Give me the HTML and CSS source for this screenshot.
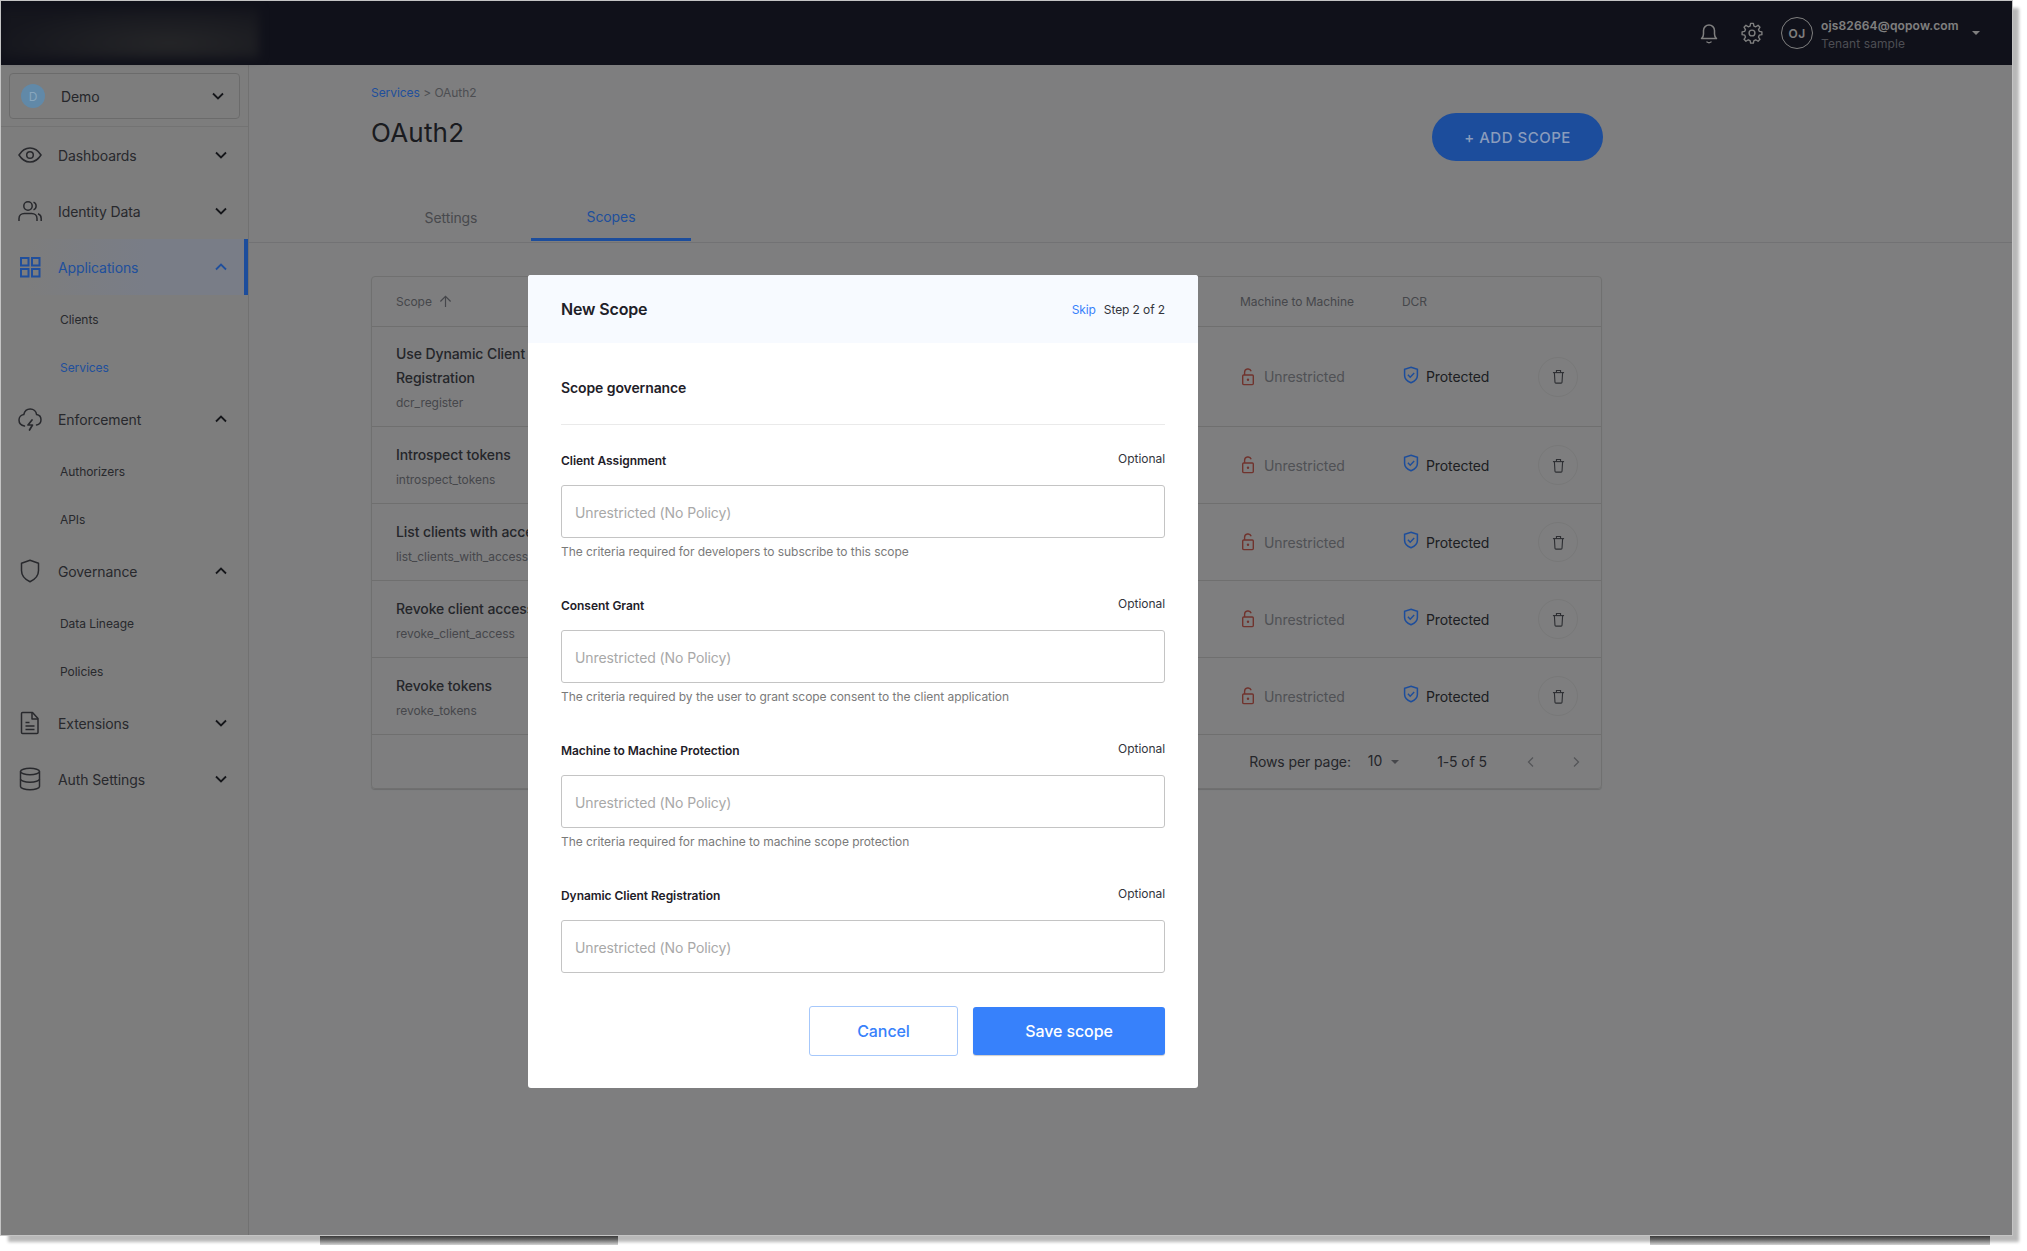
FILE: index.html
```html
<!DOCTYPE html>
<html lang="en">
<head>
  <meta charset="UTF-8">
  <meta name="viewport" content="width=device-width, initial-scale=1.0">
  <title>OAuth2 - New Scope</title>
  <link rel="stylesheet" href="styles.css">
</head>
<body>
  <svg class="sprite" xmlns="http://www.w3.org/2000/svg">
    <symbol id="i-down" viewBox="0 0 16 16"><path d="M3 5.5l5 5 5-5" fill="none" stroke="currentColor" stroke-width="1.8"/></symbol>
    <symbol id="i-up" viewBox="0 0 16 16"><path d="M3 10.5l5-5 5 5" fill="none" stroke="currentColor" stroke-width="1.8"/></symbol>
    <symbol id="i-lock" viewBox="0 0 14 18"><g fill="none" stroke="currentColor" stroke-width="1.4"><rect x="1.7" y="7" width="10.6" height="9.6" rx="1"/><path d="M3.6 7V4.4a3.4 3.4 0 0 1 6.6-1.2"/></g><circle cx="7" cy="11.8" r="1.2" fill="currentColor"/></symbol>
    <symbol id="i-shield" viewBox="0 0 16 18"><path d="M8 1.2l6.4 2.2v6c0 3.4-3 5.9-6.4 7.4-3.4-1.5-6.4-4-6.4-7.4v-6z" fill="none" stroke="currentColor" stroke-width="1.5"/><path d="M4.9 8.8l2.3 2.4 4-4.2" fill="none" stroke="currentColor" stroke-width="1.4"/></symbol>
    <symbol id="i-trash" viewBox="0 0 14 16"><g fill="none" stroke="currentColor" stroke-width="1.2"><path d="M2.6 4.2l.6 10a1 1 0 0 0 1 .9h5.600a1 1 0 0 0 1-.9l.6-10"/><path d="M1 3.800h12"/><path d="M4.800 3.600V1.600h4.400v2"/></g></symbol>
  </svg>

  <div class="frame">
    <header class="topbar">
      <div class="logo-blur"></div>
      <div class="top-actions">
        <svg class="top-icon" viewBox="0 0 24 24" fill="none" stroke="currentColor" stroke-width="1.5"><path d="M4.500 17.500c1.300-1 2-2.400 2-4.500V9.500a5.500 5.500 0 0 1 11 0V13c0 2.100.7 3.500 2 4.500z" stroke-linejoin="round"/><path d="M10 21c1.200.8 2.800.8 4 0" stroke-linecap="round"/></svg>
        <svg class="top-icon gear" viewBox="0 0 24 24" fill="none" stroke="currentColor" stroke-width="1.5" stroke-linejoin="round"><path d="M10.500 1.500h3l.6 2.900 2 .8 2.500-1.600 2.100 2.100-1.600 2.500.8 2 2.900.6v3l-2.900.6-.8 2 1.600 2.500-2.100 2.100-2.500-1.600-2 .8-.6 2.900h-3l-.6-2.900-2-.8-2.500 1.600-2.100-2.100 1.600-2.500-.8-2-2.900-.6v-3l2.900-.6.8-2-1.600-2.500 2.100-2.100 2.500 1.600 2-.8z"/><circle cx="12" cy="12" r="3.200"/></svg>
        <div class="user-circle">OJ</div>
        <div class="user-info">
          <div class="user-email">ojs82664@qopow.com</div>
          <div class="user-tenant">Tenant sample</div>
        </div>
        <span class="caret top-caret"></span>
      </div>
    </header>

    <div class="layout">
      <aside class="sidebar">
        <div class="tenant-wrap">
          <div class="tenant-select">
            <span class="tenant-avatar">D</span>
            <span class="tenant-name">Demo</span>
            <svg class="chev"><use href="#i-down"/></svg>
          </div>
        </div>
        <nav>
          <a class="nav-item">
            <svg class="nav-icon" viewBox="0 0 24 24" fill="none" stroke="currentColor" stroke-width="1.5"><path d="M1 12c3-4.800 6.700-7 11-7s8 2.200 11 7c-3 4.800-6.700 7-11 7s-8-2.200-11-7z"/><circle cx="12" cy="12" r="3.300"/></svg>
            <span class="nav-label">Dashboards</span>
            <svg class="chev"><use href="#i-down"/></svg>
          </a>
          <a class="nav-item">
            <svg class="nav-icon" viewBox="0 0 24 24" fill="none" stroke="currentColor" stroke-width="1.5"><circle cx="10" cy="7" r="4.200"/><path d="M1 22v-2.500c0-3 2.400-5 5.300-5h7.400c2.900 0 5.300 2 5.300 5V22"/><path d="M15.500 3.100a4.200 4.200 0 0 1 0 7.800"/><path d="M20 14.800c1.900.8 3.200 2.500 3.200 4.700V22"/></svg>
            <span class="nav-label">Identity Data</span>
            <svg class="chev"><use href="#i-down"/></svg>
          </a>
          <a class="nav-item active">
            <svg class="nav-icon" viewBox="0 0 24 24" fill="none" stroke="currentColor" stroke-width="2"><rect x="3" y="3" width="7.500" height="7.500"/><rect x="14" y="3" width="7.500" height="7.500"/><rect x="3" y="14" width="7.500" height="7.500"/><rect x="14" y="14" width="7.500" height="7.500"/></svg>
            <span class="nav-label">Applications</span>
            <svg class="chev"><use href="#i-up"/></svg>
          </a>
          <a class="nav-sub">Clients</a>
          <a class="nav-sub current">Services</a>
          <a class="nav-item">
            <svg class="nav-icon" viewBox="0 0 24 24" fill="none" stroke="currentColor" stroke-width="1.5"><path d="M6.500 19C3 18.400 1 16 1 13c0-3 2.200-5.200 4.800-5.500C6.500 4.200 9 2 12.200 2c3.400 0 6 2.400 6.400 5.600 2.600.4 4.400 2.600 4.400 5.200 0 2.600-1.800 4.800-4.500 5.200" stroke-linecap="round"/><path d="M14 13l-4 5h4.500l-3 5" stroke-width="1.700" stroke-linejoin="round" stroke-linecap="round"/></svg>
            <span class="nav-label">Enforcement</span>
            <svg class="chev"><use href="#i-up"/></svg>
          </a>
          <a class="nav-sub">Authorizers</a>
          <a class="nav-sub">APIs</a>
          <a class="nav-item">
            <svg class="nav-icon" viewBox="0 0 24 24" fill="none" stroke="currentColor" stroke-width="1.500"><path d="M12 1.200l8.500 3v7.300c0 5-3.500 8.900-8.500 11.200-5-2.300-8.500-6.200-8.500-11.200V4.200z" stroke-linejoin="round"/></svg>
            <span class="nav-label">Governance</span>
            <svg class="chev"><use href="#i-up"/></svg>
          </a>
          <a class="nav-sub">Data Lineage</a>
          <a class="nav-sub">Policies</a>
          <a class="nav-item">
            <svg class="nav-icon" viewBox="0 0 24 24" fill="none" stroke="currentColor" stroke-width="1.500" stroke-linejoin="round"><path d="M4.500 1.500h10l5.500 6v14a1 1 0 0 1-1 1H4.500a1 1 0 0 1-1-1v-19a1 1 0 0 1 1-1z"/><path d="M14 1.500v6.500h6"/><path d="M7.500 11.500h4M7.500 15h9M7.500 18.500h9"/></svg>
            <span class="nav-label">Extensions</span>
            <svg class="chev"><use href="#i-down"/></svg>
          </a>
          <a class="nav-item">
            <svg class="nav-icon" viewBox="0 0 24 24" fill="none" stroke="currentColor" stroke-width="1.500"><ellipse cx="12" cy="4.500" rx="9.500" ry="3.200"/><path d="M2.500 4.500v15c0 1.800 4.300 3.200 9.500 3.200s9.500-1.400 9.500-3.200v-15"/><path d="M2.500 12c0 1.800 4.300 3.200 9.500 3.200s9.500-1.400 9.500-3.200"/></svg>
            <span class="nav-label">Auth Settings</span>
            <svg class="chev"><use href="#i-down"/></svg>
          </a>
        </nav>
      </aside>

      <main class="main">
        <div class="breadcrumb"><a>Services</a> &gt; OAuth2</div>
        <div class="title-row">
          <h1>OAuth2</h1>
          <button class="add-btn">+ ADD SCOPE</button>
        </div>
        <div class="tabs">
          <div class="tab">Settings</div>
          <div class="tab selected">Scopes</div>
        </div>

        <div class="table-card">
          <div class="row head">
            <div class="cell-scope">Scope <svg class="sort-arrow" viewBox="0 0 14 14" fill="none" stroke="currentColor" stroke-width="1.300"><path d="M7 13V1.500M1.500 7L7 1.500 12.500 7"/></svg></div>
            <div>Machine to Machine</div>
            <div>DCR</div>
            <div></div>
          </div>
          <div class="row first">
            <div class="scope-info"><div class="scope-name">Use Dynamic Client Registration</div><div class="scope-code">dcr_register</div></div>
            <div class="status"><svg class="lock"><use href="#i-lock"/></svg>Unrestricted</div>
            <div class="dcr"><svg class="shield"><use href="#i-shield"/></svg>Protected</div>
            <div class="del"><svg class="trash"><use href="#i-trash"/></svg></div>
          </div>
          <div class="row">
            <div class="scope-info"><div class="scope-name">Introspect tokens</div><div class="scope-code">introspect_tokens</div></div>
            <div class="status"><svg class="lock"><use href="#i-lock"/></svg>Unrestricted</div>
            <div class="dcr"><svg class="shield"><use href="#i-shield"/></svg>Protected</div>
            <div class="del"><svg class="trash"><use href="#i-trash"/></svg></div>
          </div>
          <div class="row">
            <div class="scope-info"><div class="scope-name">List clients with access</div><div class="scope-code">list_clients_with_access</div></div>
            <div class="status"><svg class="lock"><use href="#i-lock"/></svg>Unrestricted</div>
            <div class="dcr"><svg class="shield"><use href="#i-shield"/></svg>Protected</div>
            <div class="del"><svg class="trash"><use href="#i-trash"/></svg></div>
          </div>
          <div class="row">
            <div class="scope-info"><div class="scope-name">Revoke client access</div><div class="scope-code">revoke_client_access</div></div>
            <div class="status"><svg class="lock"><use href="#i-lock"/></svg>Unrestricted</div>
            <div class="dcr"><svg class="shield"><use href="#i-shield"/></svg>Protected</div>
            <div class="del"><svg class="trash"><use href="#i-trash"/></svg></div>
          </div>
          <div class="row">
            <div class="scope-info"><div class="scope-name">Revoke tokens</div><div class="scope-code">revoke_tokens</div></div>
            <div class="status"><svg class="lock"><use href="#i-lock"/></svg>Unrestricted</div>
            <div class="dcr"><svg class="shield"><use href="#i-shield"/></svg>Protected</div>
            <div class="del"><svg class="trash"><use href="#i-trash"/></svg></div>
          </div>
          <div class="table-foot">
            <span class="rows-label">Rows per page:</span>
            <span class="rows-value">10</span>
            <span class="caret rows-caret"></span>
            <span class="page-info">1-5 of 5</span>
            <svg class="page-arrow" viewBox="0 0 12 12" fill="none" stroke="currentColor" stroke-width="1.300"><path d="M8 1.500L3.500 6 8 10.500"/></svg>
            <svg class="page-arrow" viewBox="0 0 12 12" fill="none" stroke="currentColor" stroke-width="1.300"><path d="M4 1.500L8.500 6 4 10.500"/></svg>
          </div>
        </div>
      </main>
    </div>

    <div class="backdrop">
      <div class="modal">
        <div class="modal-head">
          <h2>New Scope</h2>
          <div class="modal-step"><a>Skip</a><span>Step 2 of 2</span></div>
        </div>
        <div class="modal-body">
          <h3>Scope governance</h3>
          <div class="field">
            <div class="field-top"><label>Client Assignment</label><span>Optional</span></div>
            <input type="text" placeholder="Unrestricted (No Policy)">
            <p>The criteria required for developers to subscribe to this scope</p>
          </div>
          <div class="field">
            <div class="field-top"><label>Consent Grant</label><span>Optional</span></div>
            <input type="text" placeholder="Unrestricted (No Policy)">
            <p>The criteria required by the user to grant scope consent to the client application</p>
          </div>
          <div class="field">
            <div class="field-top"><label>Machine to Machine Protection</label><span>Optional</span></div>
            <input type="text" placeholder="Unrestricted (No Policy)">
            <p>The criteria required for machine to machine scope protection</p>
          </div>
          <div class="field field-last">
            <div class="field-top"><label>Dynamic Client Registration</label><span>Optional</span></div>
            <input type="text" placeholder="Unrestricted (No Policy)">
          </div>
          <div class="modal-actions">
            <button class="btn-cancel">Cancel</button>
            <button class="btn-save">Save scope</button>
          </div>
        </div>
      </div>
    </div>
  </div>
  <div class="shadow-patch left"></div>
  <div class="shadow-patch right"></div>
</body>
</html>
```

FILE: styles.css
```css
* {
  box-sizing: border-box;
}
html, body {
  margin: 0;
  height: 100%;
  background: #fff;
  overflow: hidden;
}
body {
  font-family: Inter, "Noto Sans", sans-serif;
  font-size: 14px;
  letter-spacing: -0.1px;
  color: #3a3c44;
  position: relative;
}
.sprite {
  display: none;
}
.frame {
  position: relative;
  width: 2013px;
  height: 1236px;
  border: 1px solid #c4c4c4;
  background: #fcfdff;
  box-shadow: 7px 7px 3px -1px rgba(0, 0, 0, 0.28);
  display: flex;
  flex-direction: column;
  overflow: hidden;
}
.shadow-patch {
  position: absolute;
  top: 1236px;
  height: 9px;
  background: linear-gradient(#3a3a3a, #666 40%, #d4d4d4);
}
.shadow-patch.left {
  left: 320px;
  width: 298px;
}
.shadow-patch.right {
  left: 1650px;
  width: 340px;
}

/* these stay more saturated than a plain black scrim allows, so they sit over it */
.tenant-avatar,
.add-btn,
.nav-item.active,
.nav-sub.current,
.breadcrumb a,
.tab.selected,
.shield {
  position: relative;
  z-index: 2;
}

/* top bar */
.topbar {
  height: 64px;
  flex-shrink: 0;
  background: #202234;
  display: flex;
  align-items: center;
  justify-content: space-between;
}
.logo-blur {
  width: 258px;
  height: 50px;
  background: radial-gradient(ellipse at 65% 70%, #4a4b50, #2a2c3a 75%);
  filter: blur(5px);
}
.top-actions {
  display: flex;
  align-items: center;
  color: #fff;
  padding-right: 32px;
}
.top-icon {
  width: 24px;
  height: 24px;
  margin-right: 20px;
}
.top-icon.gear {
  width: 22px;
  height: 22px;
  margin-right: 18px;
}
.user-circle {
  width: 32px;
  height: 32px;
  border: 1.5px solid #fff;
  border-radius: 50%;
  font-size: 12px;
  font-weight: 600;
  letter-spacing: 0.3px;
  display: flex;
  align-items: center;
  justify-content: center;
  margin-right: 8px;
}
.user-info {
  width: 141px;
  margin-right: 10px;
  padding-top: 4px;
}
.user-email {
  font-size: 12px;
  line-height: 18px;
  font-weight: 600;
  letter-spacing: 0.15px;
}
.user-tenant {
  font-size: 12px;
  line-height: 18px;
  letter-spacing: 0.1px;
  color: #9a9ca6;
}
.caret {
  width: 0;
  height: 0;
  border-left: 4px solid transparent;
  border-right: 4px solid transparent;
  border-top: 4px solid #fff;
}

/* sidebar */
.layout {
  flex: 1;
  display: flex;
  min-height: 0;
}
.sidebar {
  width: 248px;
  flex-shrink: 0;
  background: #fbfbfb;
  border-right: 1px solid #e2e2e2;
}
.tenant-wrap {
  padding: 8px 8px 7px 8px;
  border-bottom: 1px solid #e6e6e6;
  height: 62px;
}
.tenant-select {
  height: 46px;
  border: 1px solid #d6d6d6;
  border-radius: 4px;
  display: flex;
  align-items: center;
  padding: 0 13px 0 11px;
}
.tenant-avatar {
  width: 24px;
  height: 24px;
  border-radius: 50%;
  background: #6189a8;
  color: #88a6bd;
  font-size: 12px;
  display: flex;
  align-items: center;
  justify-content: center;
  margin-right: 16px;
}
.tenant-name {
  flex: 1;
  color: #4a4c54;
}
.chev {
  width: 16px;
  height: 16px;
  color: #2a2c34;
}
.nav-item {
  height: 56px;
  display: flex;
  align-items: center;
  padding: 0 19px 0 17px;
  color: #50525a;
}
.nav-icon {
  width: 24px;
  height: 24px;
  margin-right: 16px;
}
.nav-label {
  flex: 1;
}
.nav-item.active {
  color: #204f9c;
  background: linear-gradient(90deg, #7d7d7d 10%, #797d87 60%);
  border-right: 4px solid #1c4d9c;
  padding-right: 15px;
}
.nav-item.active .chev {
  color: #204f9c;
}
.nav-sub {
  height: 48px;
  display: flex;
  align-items: center;
  padding-left: 59px;
  font-size: 12px;
  letter-spacing: -0.05px;
  color: #50525a;
}
.nav-sub.current {
  color: #204f9c;
}

/* main */
.main {
  flex: 1;
  padding-top: 20px;
  background: #fcfdff;
}
.breadcrumb {
  margin-left: 122px;
  font-size: 12px;
  line-height: 16px;
  letter-spacing: -0.05px;
  color: #9a9ca4;
}
.breadcrumb a {
  color: #204f9c;
}
.title-row {
  margin: 12px 409px 0 122px;
  display: flex;
  justify-content: space-between;
  align-items: flex-start;
  height: 48px;
}
h1 {
  margin: 2px 0 0;
  font-size: 26px;
  line-height: 36px;
  font-weight: 400;
  letter-spacing: 0.2px;
  color: #34363e;
}
.add-btn {
  width: 171px;
  height: 48px;
  border: none;
  border-radius: 24px;
  background: #1c4d9c;
  color: #8a9cbc;
  font-family: inherit;
  font-size: 15px;
  font-weight: 500;
  letter-spacing: 0.5px;
}
.tabs {
  margin-top: 32px;
  height: 50px;
  padding-left: 122px;
  display: flex;
  border-bottom: 1px solid #e4e5e8;
}
.tab {
  width: 160px;
  height: 49px;
  display: flex;
  align-items: center;
  justify-content: center;
  color: #90929a;
}
.tab.selected {
  width: 160px;
  color: #204f9c;
  border-bottom: 3px solid #1c4d9c;
  height: 48px;
  padding-top: 1px;
}

/* scope table */
.table-card {
  margin: 33px 0 0 122px;
  width: 1231px;
  border: 1px solid #e0e0e0;
  border-radius: 4px;
  box-shadow: 0 1px 1px rgba(0, 0, 0, 0.15);
}
.row {
  display: grid;
  grid-template-columns: 844px 162px 136px 40px;
  padding-left: 24px;
  align-items: center;
  min-height: 77px;
  border-bottom: 1px solid #dedede;
}
.row.head {
  min-height: 50px;
  font-size: 12px;
  letter-spacing: -0.05px;
  color: #8c8e96;
}
.row.first {
  min-height: 100px;
}
.cell-scope {
  display: flex;
  align-items: center;
  gap: 7px;
}
.sort-arrow {
  width: 13px;
  height: 13px;
}
.scope-name {
  max-width: 170px;
  line-height: 24px;
  font-weight: 500;
  color: #4a4c54;
}
.scope-code {
  margin-top: 5px;
  font-size: 12px;
  line-height: 16px;
  letter-spacing: -0.05px;
  color: #8c8e96;
}
.status,
.dcr {
  display: flex;
  align-items: center;
}
.status {
  color: #a0a2aa;
}
.lock {
  width: 14px;
  height: 18px;
  margin-right: 9px;
  margin-left: 1px;
  color: #e0665a;
}
.dcr {
  color: #3a3c44;
}
.shield {
  width: 16px;
  height: 18px;
  margin: -4px 7px 0 1px;
  color: #1c4d9c;
}
.del {
  width: 40px;
  height: 40px;
  border: 1px solid #f0f0f0;
  border-radius: 50%;
  display: flex;
  align-items: center;
  justify-content: center;
}
.trash {
  width: 13px;
  height: 15px;
  color: #5a5c64;
}
.table-foot {
  height: 53px;
  display: flex;
  align-items: center;
  justify-content: flex-end;
  color: #4a4c54;
}
.rows-label {
  margin-right: 17px;
}
.rows-value {
  margin: -3px 9px 0 0;
}
.caret.rows-caret {
  border-top-color: #8c8e96;
  margin-right: 38px;
}
.page-info {
  margin-right: 38px;
}
.page-arrow {
  width: 12px;
  height: 12px;
  color: #a8aab0;
  margin-right: 33px;
}
.page-arrow:last-child {
  margin-right: 19px;
}

/* modal */
.backdrop {
  position: absolute;
  inset: 0;
  background: rgba(0, 0, 0, 0.5);
}
.modal {
  position: absolute;
  left: 527px;
  top: 274px;
  width: 670px;
  background: #fff;
  border-radius: 3px;
  overflow: hidden;
  color: #1e2028;
}
.modal-head {
  height: 68px;
  background: #f7faff;
  padding: 0 33px;
  display: flex;
  align-items: center;
  justify-content: space-between;
}
h2 {
  margin: 0;
  font-size: 16px;
  font-weight: 600;
  letter-spacing: -0.15px;
}
.modal-step {
  font-size: 12px;
  letter-spacing: -0.1px;
  display: flex;
  gap: 8px;
  color: #33353c;
}
.modal-step a {
  color: #3781fb;
}
.modal-body {
  padding: 35px 33px 32px;
}
h3 {
  margin: 0;
  font-size: 14px;
  line-height: 20px;
  font-weight: 600;
  padding-bottom: 26px;
  border-bottom: 1px solid #eaeaea;
  margin-bottom: 27px;
}
.field {
  margin-bottom: 37px;
}
.field-last {
  margin-bottom: 33px;
}
.field-top {
  display: flex;
  justify-content: space-between;
  height: 18px;
  margin-bottom: 15px;
  font-size: 12px;
  letter-spacing: -0.05px;
}
.field-top label {
  font-weight: 600;
  line-height: 18px;
}
.field-top span {
  line-height: 14px;
  color: #33353c;
}
.field input {
  display: block;
  width: 100%;
  height: 53px;
  border: 1px solid #c4c4c4;
  border-radius: 3px;
  padding: 1px 13px 0;
  font-family: inherit;
  font-size: 14px;
  letter-spacing: -0.1px;
  outline: none;
}
.field input::placeholder {
  color: #a8a8a8;
  opacity: 1;
}
.field p {
  margin: 6px 0 0;
  font-size: 12px;
  line-height: 16px;
  letter-spacing: -0.05px;
  color: #7a7a7a;
}
.modal-actions {
  display: flex;
  justify-content: flex-end;
  align-items: center;
  gap: 15px;
}
.btn-cancel,
.btn-save {
  font-family: inherit;
  font-size: 16px;
  font-weight: 500;
  letter-spacing: -0.1px;
  border-radius: 3px;
}
.btn-cancel {
  width: 149px;
  height: 50px;
  background: #fff;
  color: #3781fb;
  border: 1px solid #a6c8fb;
}
.btn-save {
  width: 192px;
  height: 48px;
  background: #3781fb;
  color: #fff;
  border: none;
  box-shadow: 0 1px 1px rgba(0, 0, 0, 0.2);
}
```
